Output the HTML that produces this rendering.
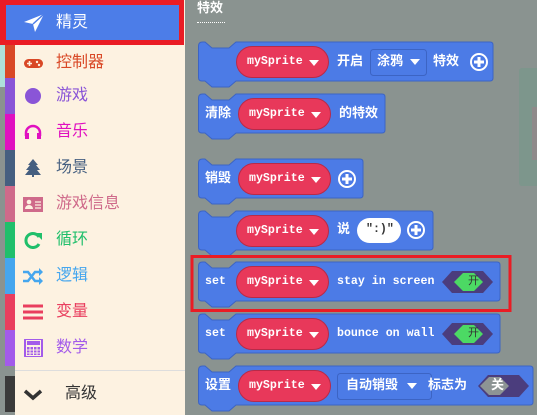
<!DOCTYPE html>
<html><head><meta charset="utf-8"><style>
body{margin:0;width:537px;height:415px;overflow:hidden;background:#8a9390;position:relative;font-family:"Liberation Sans","Noto Sans CJK SC",sans-serif}
.a{position:absolute}
.menu{left:15px;top:0;width:170px;height:415px;background:#fdf2e1}
.row{position:absolute;left:15px;width:170px;height:36px;font-size:16px;line-height:36px}
.row span{position:absolute;left:41px}
.stripe{position:absolute;left:5px;width:10px}
.ic{position:absolute;left:8px;top:9px;width:20px;height:18px}
.t{position:absolute;color:#fff;font-weight:bold;font-size:11.6px;line-height:16px;white-space:nowrap;font-family:"Liberation Mono","Noto Sans CJK SC",monospace}
.c{font-size:13px}
.pill{position:absolute;background:#e8385a;border:1px solid #b82a48;border-radius:16px;height:32px;color:#fff;font:bold 11.6px/30px "Liberation Mono",monospace;box-sizing:border-box;padding-left:10px}
.pill svg{position:absolute;right:9px;top:13px}
</style></head><body>
<div class="a" style="left:0;top:0;width:5px;height:87px;background:#aee0da"></div>
<div class="a menu"></div>
<div class="stripe" style="top:45px;height:33px;background:#d94826"></div>
<div class="stripe" style="top:78px;height:36px;background:#8a55d7"></div>
<div class="stripe" style="top:114px;height:36px;background:#e010c0"></div>
<div class="stripe" style="top:150px;height:36px;background:#455f80"></div>
<div class="stripe" style="top:186px;height:36px;background:#cf6a8a"></div>
<div class="stripe" style="top:222px;height:36px;background:#20bf6b"></div>
<div class="stripe" style="top:258px;height:36px;background:#45a6ee"></div>
<div class="stripe" style="top:294px;height:36px;background:#e93e5e"></div>
<div class="stripe" style="top:330px;height:36px;background:#a35bea"></div>
<div class="stripe" style="top:376px;height:36px;background:#3a3a3a"></div>
<div class="a" style="left:15px;top:370px;width:170px;height:1px;background:#ddd"></div>

<div class="a" style="left:0;top:0;width:184px;height:45px;background:#ea1c24"></div>
<div class="a" style="left:6px;top:5px;width:173px;height:35px;background:#4c7de8"></div>
<svg class="a" style="left:23px;top:13px" width="22" height="20" viewBox="0 0 22 20"><path d="M1 9 L21 1 L12 19 L10 11 Z" fill="#fff"/><path d="M10 11 L21 1" stroke="#4c7de8" stroke-width="1.5"/></svg>
<div class="a" style="left:56px;top:5px;font-size:16px;line-height:36px;color:#fff">精灵</div>

<div class="row" style="top:45px;color:#d94826"><svg class="ic" viewBox="0 0 20 18"><rect x="1" y="5" width="19" height="9" rx="4.5" fill="#d94826"/><path d="M4 9.5h5M6.5 7v5" stroke="#fdf2e1" stroke-width="1.6"/><circle cx="14" cy="8" r="1.2" fill="#fdf2e1"/><circle cx="16" cy="11" r="1.2" fill="#fdf2e1"/></svg><span>控制器</span></div>
<div class="row" style="top:78px;color:#8a55d7"><svg class="ic" viewBox="0 0 20 18"><circle cx="10" cy="9" r="8" fill="#8a55d7"/></svg><span>游戏</span></div>
<div class="row" style="top:114px;color:#e010c0"><svg class="ic" viewBox="0 0 20 18"><path d="M3 13 V10 a7 7 0 0 1 14 0 V13" fill="none" stroke="#e010c0" stroke-width="2.5"/><rect x="2" y="10" width="4" height="6" fill="#e010c0"/><rect x="14" y="10" width="4" height="6" fill="#e010c0"/></svg><span>音乐</span></div>
<div class="row" style="top:150px;color:#455f80"><svg class="ic" viewBox="0 0 20 18"><path d="M10 0 L15 6 H13 L17 11 H14 L18 16 H2 L6 11 H3 L7 6 H5 Z" fill="#455f80"/><rect x="9" y="15" width="2" height="3" fill="#455f80"/></svg><span>场景</span></div>
<div class="row" style="top:186px;color:#cf6a8a"><svg class="ic" viewBox="0 0 20 18"><rect x="0" y="2" width="20" height="15" fill="#cf6a8a"/><circle cx="6" cy="7" r="2.3" fill="#fdf2e1"/><path d="M2 14 a4 4 0 0 1 8 0z" fill="#fdf2e1"/><path d="M12 7h6M12 10h6M12 13h6" stroke="#fdf2e1" stroke-width="1.3"/></svg><span>游戏信息</span></div>
<div class="row" style="top:222px;color:#20bf6b"><svg class="ic" viewBox="0 0 20 18"><path d="M16 6 A7 7 0 1 0 16 13" fill="none" stroke="#20bf6b" stroke-width="3"/><path d="M12 2 L19 2 L19 9 Z" fill="#20bf6b"/></svg><span>循环</span></div>
<div class="row" style="top:258px;color:#45a6ee"><svg class="ic" viewBox="0 0 20 18"><path d="M0 5h5l7 9h5M0 14h5l7-9h5" fill="none" stroke="#45a6ee" stroke-width="2.5"/><path d="M16 1l4 4-4 4zM16 10l4 4-4 4z" fill="#45a6ee"/></svg><span>逻辑</span></div>
<div class="row" style="top:294px;color:#e93e5e"><svg class="ic" viewBox="0 0 20 18"><path d="M0 3h20M0 9h20M0 15h20" stroke="#e93e5e" stroke-width="3"/></svg><span>变量</span></div>
<div class="row" style="top:330px;color:#a35bea"><svg class="ic" viewBox="0 0 20 18"><rect x="2" y="0" width="17" height="18" rx="1" fill="none" stroke="#a35bea" stroke-width="2"/><rect x="4" y="2" width="13" height="4" fill="#a35bea"/><path d="M4 8h13v8H4z" fill="#a35bea"/><path d="M7 8v8M10.5 8v8M14 8v8M4 11h13M4 14h13" stroke="#fdf2e1" stroke-width="1"/></svg><span>数学</span></div>
<div class="row" style="top:376px;color:#333"><svg class="ic" viewBox="0 0 20 18"><path d="M2 6l8 7 8-7" fill="none" stroke="#333" stroke-width="3.5"/></svg><span style="left:50px">高级</span></div>

<div class="a" style="left:197px;top:-3px;color:#fff;font-weight:bold;font-size:13px">特效</div>
<div class="a" style="left:197px;top:22px;width:28px;border-top:1px dotted #fff"></div>
<div class="a" style="left:519px;top:68px;width:20px;height:118px;background:#7d968c;border-radius:3px"></div>
<div class="a" style="left:532px;top:107px;width:8px;height:53px;background:#8f8a8a"></div>

<svg class="a" style="left:0;top:0" width="537" height="415">
<g fill="#4c7be6" stroke="#3c64c4" stroke-width="1">
<path d="M198.5 46 q0-4 4-4 H205 l7 6 h17 l7-6 H490 q3 0 3 3 V78 q0 3 -3 3 H236 l-7 6 h-17 l-7-6 H202 q-3.5 0-3.5-3.5 Z"/>
<path d="M198.5 98 q0-4 4-4 H205 l7 6 h17 l7-6 H382 q3 0 3 3 V130 q0 3 -3 3 H236 l-7 6 h-17 l-7-6 H202 q-3.5 0-3.5-3.5 Z"/>
<path d="M198.5 163 q0-4 4-4 H205 l7 6 h17 l7-6 H360 q3 0 3 3 V195 q0 3 -3 3 H236 l-7 6 h-17 l-7-6 H202 q-3.5 0-3.5-3.5 Z"/>
<path d="M198.5 215 q0-4 4-4 H205 l7 6 h17 l7-6 H430 q3 0 3 3 V247 q0 3 -3 3 H236 l-7 6 h-17 l-7-6 H202 q-3.5 0-3.5-3.5 Z"/>
<path d="M198.5 266 q0-4 4-4 H205 l7 6 h17 l7-6 H497 q3 0 3 3 V298 q0 3 -3 3 H236 l-7 6 h-17 l-7-6 H202 q-3.5 0-3.5-3.5 Z"/>
<path d="M198.5 318 q0-4 4-4 H205 l7 6 h17 l7-6 H497 q3 0 3 3 V350 q0 3 -3 3 H236 l-7 6 h-17 l-7-6 H202 q-3.5 0-3.5-3.5 Z"/>
<path d="M198.5 370 q0-4 4-4 H205 l7 6 h17 l7-6 H530 q3 0 3 3 V402 q0 3 -3 3 H236 l-7 6 h-17 l-7-6 H202 q-3.5 0-3.5-3.5 Z"/>
</g>
<rect x="370.5" y="49.5" width="56" height="26" rx="3" fill="#4c7be6" stroke="#3c64c4"/>
<rect x="337.5" y="373.5" width="94" height="26" rx="3" fill="#4c7be6" stroke="#3c64c4"/>
<g fill="none" stroke="#fff" stroke-width="2"><circle cx="479" cy="62" r="8"/><circle cx="347" cy="179" r="8"/><circle cx="416" cy="230" r="8"/></g>
<g stroke="#fff" stroke-width="3"><path d="M474 62h10M479 57v10M342 179h10M347 174v10M411 230h10M416 225v10"/></g>
<rect x="357" y="218" width="44" height="25" rx="12.5" fill="#fff"/>
<g fill="#4b3d7d"><path d="M442 282 l10-11 h31 l10 11 -10 11 h-31z"/><path d="M442 334 l10-11 h31 l10 11 -10 11 h-31z"/><path d="M478 386 l10-11 h31 l10 11 -10 11 h-31z"/></g>
<path d="M454 282 l9-9 h11 l9 9 -9 9 h-11z" fill="#4cd964"/>
<path d="M454 334 l9-9 h11 l9 9 -9 9 h-11z" fill="#4cd964"/>
<path d="M480 386 l9-9 h11 l9 9 -9 9 h-11z" fill="#8d9494"/>
<path d="M410 59h10l-5 6z M648 0z" fill="#fff"/>
<path d="M407 383h10l-5 6z" fill="#fff"/>
<rect x="192" y="256.5" width="318" height="54" fill="none" stroke="#ea1c24" stroke-width="3"/>
</svg>

<div class="pill" style="left:236px;top:46px;width:93px">mySprite<svg width="10" height="6"><path d="M0 0h10L5 6z" fill="#fff"/></svg></div>
<div class="t c" style="left:337px;top:54px">开启</div>
<div class="t c" style="left:377px;top:54px">涂鸦</div>
<div class="t c" style="left:433px;top:54px">特效</div>

<div class="t c" style="left:205px;top:106px">清除</div>
<div class="pill" style="left:238px;top:98px;width:93px">mySprite<svg width="10" height="6"><path d="M0 0h10L5 6z" fill="#fff"/></svg></div>
<div class="t c" style="left:339px;top:106px">的特效</div>

<div class="t c" style="left:205px;top:171px">销毁</div>
<div class="pill" style="left:238px;top:163px;width:93px">mySprite<svg width="10" height="6"><path d="M0 0h10L5 6z" fill="#fff"/></svg></div>

<div class="pill" style="left:236px;top:215px;width:93px">mySprite<svg width="10" height="6"><path d="M0 0h10L5 6z" fill="#fff"/></svg></div>
<div class="t c" style="left:337px;top:222px">说</div>
<div class="t" style="left:366px;top:222px;color:#333">":)"</div>

<div class="t" style="left:205px;top:274px">set</div>
<div class="pill" style="left:236px;top:266px;width:93px">mySprite<svg width="10" height="6"><path d="M0 0h10L5 6z" fill="#fff"/></svg></div>
<div class="t" style="left:337px;top:274px">stay in screen</div>
<div class="t" style="left:468px;top:274px;color:#333;font-size:11px;font-weight:normal">开</div>

<div class="t" style="left:205px;top:326px">set</div>
<div class="pill" style="left:236px;top:318px;width:93px">mySprite<svg width="10" height="6"><path d="M0 0h10L5 6z" fill="#fff"/></svg></div>
<div class="t" style="left:337px;top:326px">bounce on wall</div>
<div class="t" style="left:468px;top:326px;color:#333;font-size:11px;font-weight:normal">开</div>

<div class="t c" style="left:205px;top:378px">设置</div>
<div class="pill" style="left:238px;top:370px;width:93px">mySprite<svg width="10" height="6"><path d="M0 0h10L5 6z" fill="#fff"/></svg></div>
<div class="t c" style="left:346px;top:378px">自动销毁</div>
<div class="t c" style="left:428px;top:378px">标志为</div>
<div class="t c" style="left:491px;top:378px">关</div>
</body></html>
